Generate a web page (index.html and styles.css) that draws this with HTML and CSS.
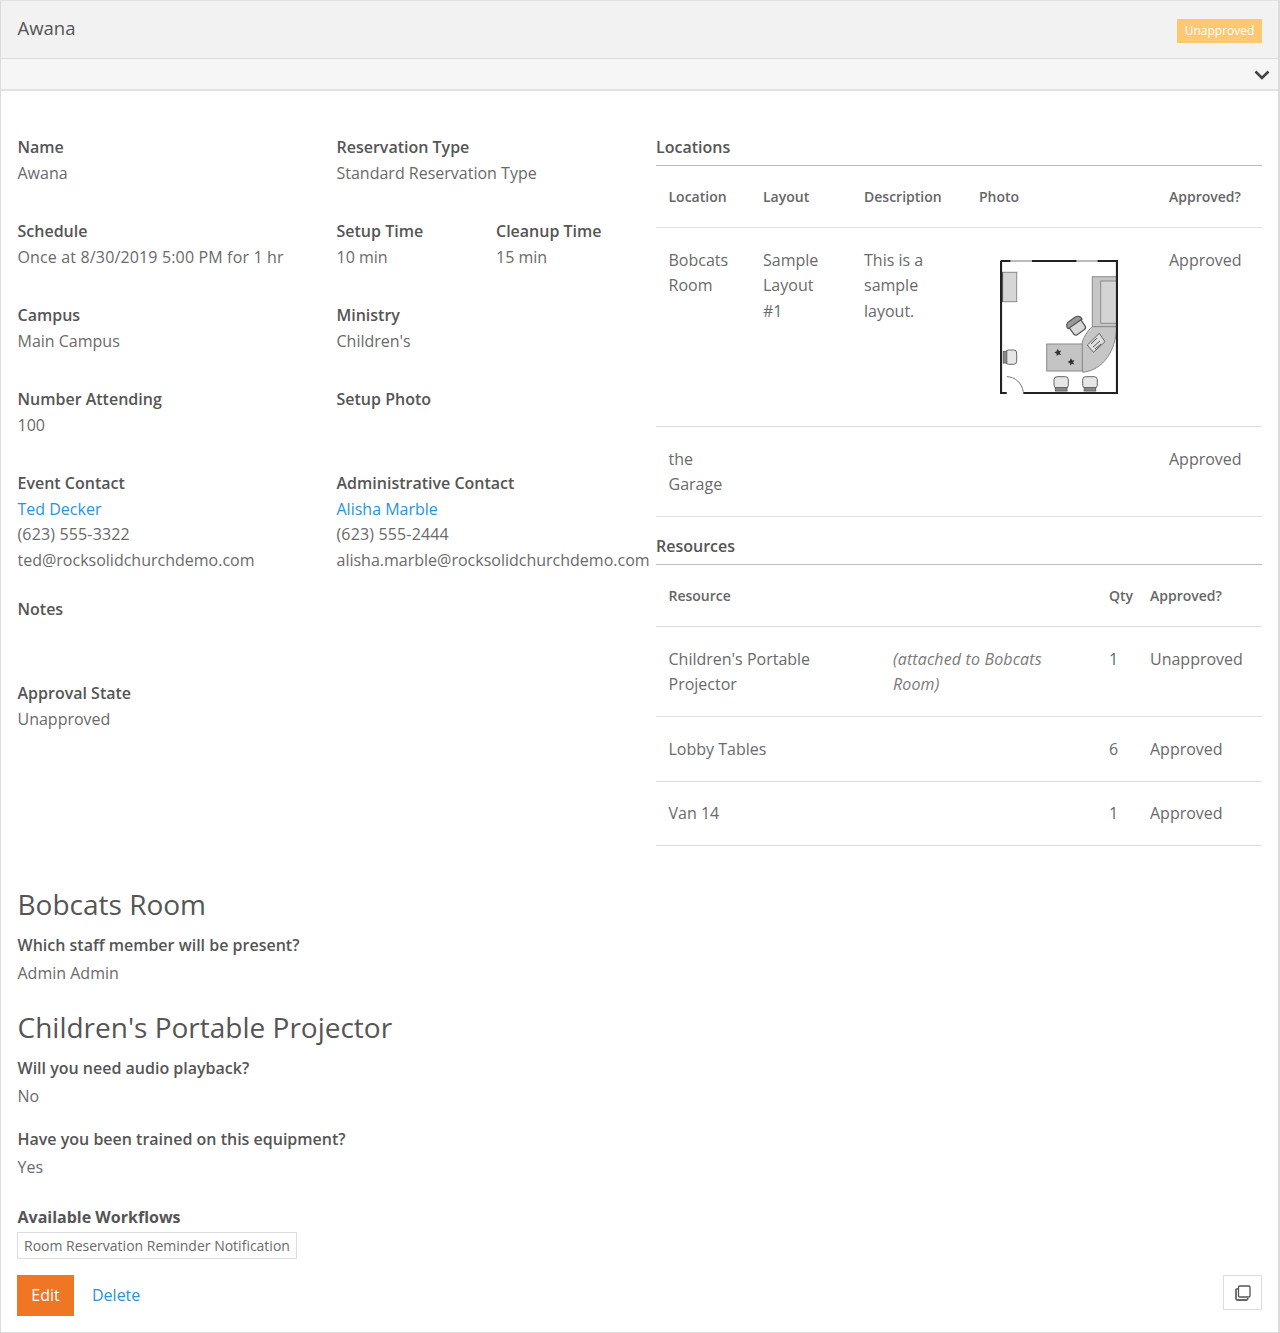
FILE: index.html
```html
<!DOCTYPE html>
<html lang="en">
<head>
<meta charset="utf-8">
<title>Awana</title>
<link rel="stylesheet" href="styles.css">
</head>
<body>
<section class="panel">
  <header class="panel-heading">
    <h1 class="panel-title">Awana</h1>
    <span class="badge">Unapproved</span>
  </header>
  <div class="drawer">
    <svg class="chevron" viewBox="0 0 16 10" width="16" height="10" aria-hidden="true"><path d="M1.500 1.500 8 8l6.500-6.500" fill="none" stroke="#444" stroke-width="2.600"/></svg>
  </div>
  <div class="panel-body">
    <div class="columns">
      <div class="details">
        <dl class="field"><dt>Name</dt><dd>Awana</dd></dl>
        <dl class="field"><dt>Reservation Type</dt><dd>Standard Reservation Type</dd></dl>
        <dl class="field"><dt>Schedule</dt><dd class="num">Once at 8/30/2019 5:00 PM for 1 hr</dd></dl>
        <div class="pair">
          <dl class="field"><dt>Setup Time</dt><dd>10 min</dd></dl>
          <dl class="field"><dt>Cleanup Time</dt><dd>15 min</dd></dl>
        </div>
        <dl class="field"><dt>Campus</dt><dd>Main Campus</dd></dl>
        <dl class="field"><dt>Ministry</dt><dd>Children's</dd></dl>
        <dl class="field"><dt>Number Attending</dt><dd>100</dd></dl>
        <dl class="field"><dt>Setup Photo</dt><dd>&nbsp;</dd></dl>
        <dl class="field contact"><dt>Event Contact</dt><dd><a href="#">Ted Decker</a></dd><dd class="num">(623) 555-3322</dd><dd>ted@rocksolidchurchdemo.com</dd></dl>
        <dl class="field contact"><dt>Administrative Contact</dt><dd><a href="#">Alisha Marble</a></dd><dd class="num">(623) 555-2444</dd><dd>alisha.marble@rocksolidchurchdemo.com</dd></dl>
        <dl class="field wide"><dt>Notes</dt><dd>&nbsp;</dd></dl>
        <dl class="field wide"><dt>Approval State</dt><dd>Unapproved</dd></dl>
      </div>
      <div class="lists">
        <h2 class="list-title">Locations</h2>
        <table class="grid locations">
          <colgroup><col class="c-loc"><col class="c-layout"><col class="c-desc"><col class="c-photo"><col></colgroup>
          <thead><tr><th>Location</th><th>Layout</th><th>Description</th><th>Photo</th><th>Approved?</th></tr></thead>
          <tbody>
            <tr>
              <td>Bobcats Room</td><td>Sample Layout<br>#1</td><td>This is a sample layout.</td>
              <td class="photo">
                <svg class="plan" viewBox="0 0 118 134" width="118" height="134" role="img" aria-label="Sample room layout">
                  <g stroke="#8a8a8a" stroke-width="1">
                    <rect x="2.700" y="12.300" width="14" height="29.400" fill="#d6d6d6"/>
                    <rect x="92.300" y="16.700" width="24.400" height="50" fill="#c6c6c6"/>
                    <rect x="100.700" y="21" width="16" height="42.300" fill="#d4d4d4"/>
                    <path d="M92.300 66.700H116.700C116 90 104 110 82.700 112.300L81.700 85C83 78 87 71 92.300 66.700Z" fill="#c6c6c6"/>
                    <rect x="46.700" y="84" width="35.600" height="27" fill="#c4c4c4"/>
                    <path d="M87.300 85 99.300 73.300 105 81.700 93.300 92.300Z" fill="#dedede" stroke="#666"/>
                    <path d="M91 84 97 78M93 87 100 81M95 89 101 84" fill="none" stroke="#555"/>
                  </g>
                  <path d="M57.700 88.800 59 91 61.200 90.800 59.800 92.800 61 95 58.600 94.400 56.800 96 56.500 93.600 54.200 92.600 56.400 91.400Z" fill="#333"/>
                  <path d="M71 98.200 72.300 100.400 74.500 100.200 73.100 102.200 74.300 104.400 71.900 103.800 70.100 105.400 69.800 103 67.500 102 69.700 100.800Z" fill="#333"/>
                  <g transform="rotate(-35 76.700 66.700)" stroke="#555" stroke-width="1.200">
                    <rect x="70" y="59.500" width="14" height="14" rx="3" fill="#d8d8d8"/>
                    <path d="M68.500 62C68.500 60 70.500 58 73 58H81C83.500 58 85.500 60 85.500 62V63.500H68.500Z" fill="#999"/>
                  </g>
                  <g stroke="#666" stroke-width="1" fill="#e6e6e6">
                    <rect x="5.500" y="90" width="11.200" height="14.300" rx="3"/>
                    <rect x="3.300" y="91.500" width="3.500" height="11.500" fill="#888"/>
                    <rect x="54" y="116.700" width="14.300" height="11.500" rx="3"/>
                    <rect x="55.500" y="127.500" width="11.500" height="3.500" fill="#888"/>
                    <rect x="82.700" y="116.700" width="14.600" height="11.500" rx="3"/>
                    <rect x="84.200" y="127.500" width="11.500" height="3.500" fill="#888"/>
                  </g>
                  <path d="M.700 1H10.700M31.700 1H76.700M97.300 1H117V133H23.300M1 1V133H6.700" fill="none" stroke="#222" stroke-width="2.200"/>
                  <path d="M1 12V42" fill="none" stroke="#222" stroke-width="3"/>
                  <path d="M10.700 1H31.700M76.700 1H97.300" fill="none" stroke="#bbb" stroke-width="2"/>
                  <path d="M6.700 116.700C15 116.700 22 123 23.300 131.700" fill="none" stroke="#777"/>
                </svg>
              </td>
              <td>Approved</td>
            </tr>
            <tr><td>the Garage</td><td></td><td></td><td></td><td>Approved</td></tr>
          </tbody>
        </table>
        <h2 class="list-title resources-title">Resources</h2>
        <table class="grid resources">
          <colgroup><col class="c-res"><col class="c-note"><col class="c-qty"><col></colgroup>
          <thead><tr><th>Resource</th><th></th><th>Qty</th><th>Approved?</th></tr></thead>
          <tbody>
            <tr><td>Children's Portable Projector</td><td><em>(attached to Bobcats Room)</em></td><td>1</td><td>Unapproved</td></tr>
            <tr><td>Lobby Tables</td><td></td><td>6</td><td>Approved</td></tr>
            <tr><td>Van 14</td><td></td><td>1</td><td>Approved</td></tr>
          </tbody>
        </table>
      </div>
    </div>

    <div class="answers">
      <h2 class="answer-title">Bobcats Room</h2>
      <dl class="answer"><dt>Which staff member will be present?</dt><dd>Admin Admin</dd></dl>
      <h2 class="answer-title">Children's Portable Projector</h2>
      <dl class="answer"><dt>Will you need audio playback?</dt><dd>No</dd></dl>
      <dl class="answer"><dt>Have you been trained on this equipment?</dt><dd>Yes</dd></dl>
    </div>

    <div class="workflows">
      <div class="workflows-label">Available Workflows</div>
      <a class="workflow" href="#">Room Reservation Reminder Notification</a>
    </div>

    <div class="actions">
      <a class="btn-edit" href="#">Edit</a>
      <a class="btn-delete" href="#">Delete</a>
      <a class="btn-copy" href="#" aria-label="Copy">
        <svg viewBox="0 0 16 16" width="16" height="16" aria-hidden="true"><rect x="3.500" y="1" width="11.500" height="11" rx="1.200" fill="#fff" stroke="#555" stroke-width="1.300"/><path d="M3 3.800H2.500A1.500 1.500 0 0 0 1 5.300V13.300A1.700 1.700 0 0 0 2.700 15H11.200A1.500 1.500 0 0 0 12.700 13.500V13" fill="none" stroke="#666" stroke-width="1.800"/></svg>
      </a>
    </div>
  </div>
</section>
</body>
</html>
```
FILE: styles.css
```css
* { box-sizing: border-box; }
html, body { margin: 0; padding: 0; }
body {
  width: 1280px;
  height: 1333px;
  font-family: "Open Sans", "Noto Sans", sans-serif;
  font-size: 16px;
  line-height: 25.6px;
  color: #6a6a6a;
  background: #fff;
}
a { color: #2a93d8; text-decoration: none; }
dl, dd, dt, h1, h2 { margin: 0; }

.panel {
  height: 1333px;
  border: 1px solid #dcdcdc;
  border-top-color: #e2e2e2;
  border-right-width: 2px;
}
.panel-heading {
  height: 58px;
  padding: 0 16px 0 16.500px;
  display: flex;
  align-items: flex-start;
  justify-content: space-between;
  background: #f2f2f2;
  border-bottom: 1px solid #dcdcdc;
}
.panel-title {
  margin-top: 14px;
  font-size: 18.500px;
  font-weight: 400;
  color: #555;
  line-height: 26px;
}
.badge {
  margin-top: 18px;
  width: 85px;
  height: 24px;
  background: #fec771;
  color: #fff;
  font-size: 12px;
  line-height: 24px;
  text-align: center;
}
.drawer {
  height: 32px;
  padding: 11px 8px 0 0;
  display: flex;
  justify-content: flex-end;
  align-items: flex-start;
  background: #f6f6f6;
  border-bottom: 2px solid #e2e2e2;
}
.chevron { display: block; }

.panel-body { padding: 44px 16px 0 16.500px; }
.columns { display: flex; height: 749px; }
.details {
  width: 638.500px;
  flex: none;
  display: grid;
  grid-template-columns: 319px 319.500px;
  grid-auto-rows: min-content;
}
.field { margin-bottom: 32.800px; }
.field dt, .answer dt { font-weight: 600; color: #555; }
.workflows-label { font-weight: 700; color: #555; }
.pair { display: grid; grid-template-columns: 159.500px 160px; }
.contact { margin-bottom: 24px; }
.field.wide { grid-column: 1 / 3; }
.field dd { white-space: nowrap; }
.field .num { letter-spacing: .15px; }

.lists { width: 606px; flex: none; }
.list-title {
  font-size: 16px;
  font-weight: 600;
  color: #555;
  line-height: 25.600px;
  padding-bottom: 4px;
  border-bottom: 1px solid #bdbdbd;
}
.resources-title { margin-top: 16.700px; }
.grid { width: 606px; table-layout: fixed; border-collapse: collapse; }
.grid th {
  height: 62px;
  padding: 0 12.500px;
  text-align: left;
  font-size: 14px;
  font-weight: 600;
  color: #666;
  border-bottom: 1px solid #e0e0e0;
}
.grid td {
  padding: 19.500px 12.500px 18.500px;
  vertical-align: top;
  border-bottom: 1px solid #e0e0e0;
}
.grid em { font-style: italic; color: #7a7a7a; letter-spacing: .15px; }
.c-loc { width: 94.500px; }
.c-layout { width: 101px; }
.c-desc { width: 115px; }
.c-photo { width: 190px; }
.c-res { width: 224.500px; }
.c-note { width: 216px; }
.c-qty { width: 41px; }
.grid td.photo { padding: 32px 12.500px 0 33.500px; height: 199px; }
.plan { display: block; }

.answer-title {
  font-size: 28px;
  font-weight: 400;
  line-height: 40px;
  color: #555;
  margin-bottom: 9px;
}
.answer + .answer-title { margin-top: 21px; }
.answer { margin-bottom: 18px; }
.answer dd { margin-top: 2px; }
.workflows { margin-top: 24px; }
.workflow {
  display: inline-block;
  height: 27px;
  padding: 0 6px;
  margin: 2px 0 0 -.5px;
  border: 1px solid #ddd;
  color: #6a6a6a;
  font-size: 14px;
  line-height: 25px;
}
.actions { display: flex; align-items: flex-start; margin: 16px 0 0 -.5px; }
.btn-edit {
  width: 57px;
  height: 41px;
  background: #ee7624;
  color: #fff;
  text-align: center;
  line-height: 41px;
}
.btn-delete { margin-left: 18px; line-height: 41px; }
.btn-copy {
  margin-left: auto;
  width: 39px;
  height: 35px;
  border: 1px solid #ddd;
  display: flex;
  align-items: center;
  justify-content: center;
}
```
